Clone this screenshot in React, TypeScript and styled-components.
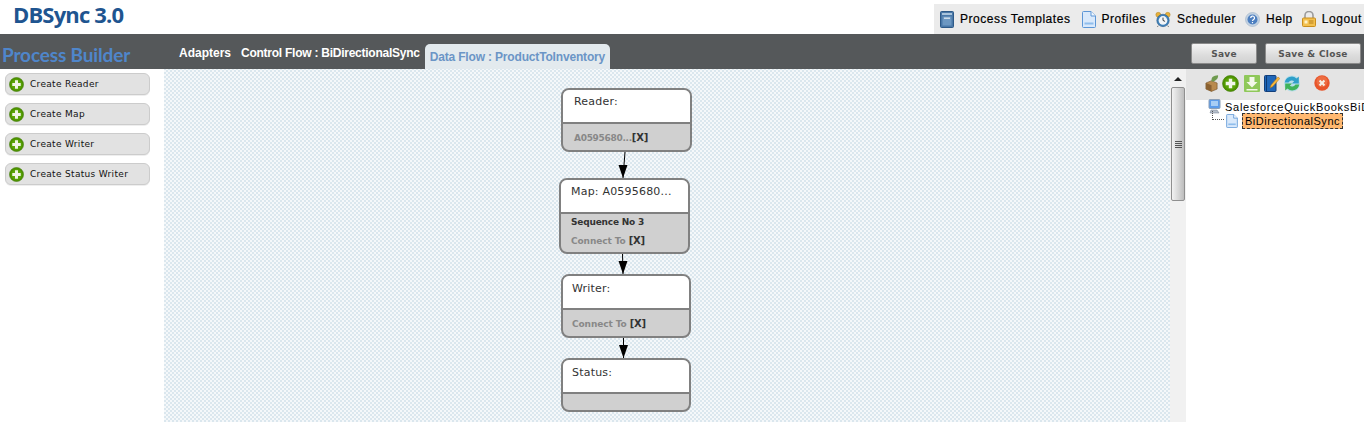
import React from "react";
import styled, { createGlobalStyle } from "styled-components";

const Global = createGlobalStyle`
  html, body { margin: 0; padding: 0; background: #fff; overflow: hidden; }
  #root { width: 1364px; height: 422px; overflow: hidden; }
`;

const Page = styled.div`
  width: 1364px; height: 422px; display: flex; flex-direction: column;
  font-family: "Liberation Sans", Arial, sans-serif; background: #fff;
`;
const Header = styled.header`
  height: 34px; flex: none; display: flex; justify-content: space-between; align-items: flex-start;
`;
const Logo = styled.div`
  font-family: "Open Sans", sans-serif; font-weight: 700; font-size: 22px; line-height: 29px;
  color: #1f5590; padding-left: 13px; letter-spacing: -0.85px;
`;
const Nav = styled.nav`
  margin-top: 4px; width: 430px; height: 30px; box-sizing: border-box; background: #ebebeb;
  display: flex; align-items: center; padding: 0 0 0 6px; overflow: hidden; white-space: nowrap;
`;
const NavItem = styled.a<{ $gap: number }>`
  display: flex; align-items: center; gap: 6px; margin-right: ${(p) => p.$gap}px;
  font-size: 12px; font-weight: 400; color: #000; -webkit-text-stroke: 0.2px #000; letter-spacing: 0.55px;
`;
const Bar = styled.div`
  height: 35px; flex: none; background: #55585a; display: flex; align-items: flex-end; position: relative;
`;
const BarTitle = styled.div`
  width: 179px; flex: none; height: 35px; box-sizing: border-box; padding: 9px 0 0 2px;
  font-family: "Lato", sans-serif; font-weight: 700; font-size: 19px; line-height: 24px; color: #4f86cb; letter-spacing: -0.15px; white-space: nowrap;
`;
const BarLink = styled.span<{ $ls: number }>`
  height: 35px; line-height: 38px; align-self: flex-start; font-size: 12px; font-weight: 700; color: #fff;
  margin-right: 10px; white-space: nowrap; letter-spacing: ${(p) => p.$ls}px;
`;
const ActiveTab = styled.span`
  width: 185px; height: 25px; box-sizing: border-box; margin-left: -5px; padding-left: 5px;
  background: #e3eaee; border-radius: 5px 5px 0 0; font-size: 12px; font-weight: 700; color: #6b95c6; line-height: 27px; white-space: nowrap; letter-spacing: -0.17px;
`;
const BarActions = styled.div`
  margin-left: auto; display: flex; gap: 8px; align-self: flex-start; padding: 9px 3px 0 0;
`;
const SaveButton = styled.button<{ $w: number }>`
  width: ${(p) => p.$w}px; height: 21px; padding: 0; border: 1px solid #8a8a8a; border-radius: 2px;
  background: linear-gradient(#f4f4f4, #dcdcdc 60%, #d2d2d2); color: #555;
  font-family: "DejaVu Sans", sans-serif; font-size: 9px; font-weight: 700; letter-spacing: 0.3px;
`;
const Main = styled.main`
  flex: 1; display: flex; min-height: 0;
`;
const Sidebar = styled.aside`
  width: 164px; flex: none; box-sizing: border-box; padding: 4px 0 0 5px; display: flex; flex-direction: column; gap: 8px;
`;
const CreateButton = styled.div`
  width: 145px; height: 22px; box-sizing: border-box; border: 1px solid #ccc; border-radius: 6px; background: #e2e2e2;
  display: flex; align-items: center; padding-left: 3px; gap: 6px;
  font-family: "DejaVu Sans", sans-serif; font-size: 9px; color: #111; box-shadow: 0 1px 0 #eee; letter-spacing: 0.32px;
`;
const Canvas = styled.section`
  width: 1006px; flex: none; position: relative; overflow: hidden;
  background-color: #f5f8fa;
  background-image:
    conic-gradient(#dbe7ee 25%, transparent 0),
    conic-gradient(#dbe7ee 25%, transparent 0);
  background-size: 4px 4px;
  background-position: -2px -1px, 0 1px;
`;
const Node = styled.div<{ $x: number; $y: number; $w: number; $h: number }>`
  position: absolute; left: ${(p) => p.$x - 164}px; top: ${(p) => p.$y - 69}px; width: ${(p) => p.$w}px; height: ${(p) => p.$h}px;
  box-sizing: border-box; border: 2px solid #808080; border-radius: 8px; overflow: hidden; background: #d0d0d0;
  display: flex; flex-direction: column; font-family: "DejaVu Sans", sans-serif;
`;
const NodeHead = styled.div<{ $top: number; $left: number }>`
  height: 34px; flex: none; box-sizing: border-box; background: #fff; border-bottom: 2px solid #808080;
  padding: ${(p) => p.$top}px 0 0 ${(p) => p.$left}px; font-size: 11px; line-height: 16px; color: #333; letter-spacing: 0.2px;
`;
const NodeBody = styled.div<{ $left: number; $single?: boolean }>`
  flex: 1; padding: ${(p) => (p.$single ? "2px" : "0")} 0 ${(p) => (p.$single ? "0" : "2px")} ${(p) => p.$left}px;
  display: flex; flex-direction: column; justify-content: center; gap: 7px;
  font-size: 9px; font-weight: 700; line-height: 11px; color: #888; letter-spacing: -0.1px;
`;
const Seq = styled.div`color: #333; letter-spacing: -0.2px;`;
const ClipId = styled.span`letter-spacing: -0.3px;`;
const Del = styled.span`color: #333; font-size: 10px; letter-spacing: -0.2px;`;
const Connectors = styled.svg`
  position: absolute; left: 0; top: 0; width: 100%; height: 100%; pointer-events: none;
`;
const ScrollTrack = styled.div`
  width: 16px; flex: none; box-sizing: border-box; background: #f1f1f1; padding: 18px 1px 0; display: flex; flex-direction: column; align-items: center; position: relative;
`;
const ScrollUp = styled.div`
  position: absolute; top: 8px; left: 4px; width: 0; height: 0; border: 4px solid transparent; border-top: 0; border-bottom: 4px solid #222;
`;
const Thumb = styled.div`
  width: 14px; height: 114px; flex: none; box-sizing: border-box; border: 1px solid #8f8f8f; border-radius: 2px;
  background: linear-gradient(90deg, #f2f2f2, #d6d6d6 55%, #bdbdbd); display: flex; flex-direction: column; align-items: center; justify-content: center; gap: 1px;
`;
const Grip = styled.i`width: 7px; height: 1px; background: #555; display: block;`;
const Panel = styled.aside`
  flex: 1; min-width: 0; overflow: hidden; display: flex; flex-direction: column;
`;
const PanelTools = styled.div`
  height: 31px; flex: none; background: #e4e4e4; display: flex; align-items: center; padding: 0 0 3px 19px; box-sizing: border-box;
`;
const ToolSlot = styled.span<{ $mr: number }>`
  display: flex; flex: none; margin-right: ${(p) => p.$mr}px;
`;
const Tree = styled.div`
  padding: 0 0 0 22px; font-size: 11px; color: #000; white-space: nowrap;
`;
const TreeRow = styled.div`
  display: flex; align-items: center; height: 13px; gap: 4px; letter-spacing: 0.72px;
  & > svg { flex: none; }
`;
const TreeChild = styled.div`
  display: flex; align-items: center; height: 16px; padding-left: 18px; gap: 4px; position: relative;
  &::before { content: ""; position: absolute; left: 4px; top: -2px; width: 12px; height: 9px; border-left: 1px dotted #555; border-bottom: 1px dotted #555; box-sizing: border-box; }
`;
const Selected = styled.span`
  background: #ffb870; border: 1px dashed #333; height: 14px; line-height: 14px; padding: 0 2px; letter-spacing: 0.52px;
`;

const Plus = ({ s = 16 }: { s?: number }) => (
  <svg width={s} height={s} viewBox="0 0 16 16">
    <circle cx="8" cy="8" r="7.5" fill="#4f9400" stroke="#3f7a08" strokeWidth=".6" />
    <circle cx="8" cy="8" r="5.6" fill="#5ba40a" />
    <path d="M6.4 3.5h3.2v2.9h2.9v3.2H9.6v2.9H6.4V9.6H3.5V6.4h2.9z" fill="#f1f5ea" />
  </svg>
);
const BookIcon = () => (
  <svg width="14" height="17" viewBox="0 0 14 17">
    <rect x=".5" y=".5" width="13" height="16" rx="1" fill="#4a78a8" stroke="#2e5a88" />
    <rect x="2" y="2" width="10" height="2" fill="#a9c4dc" />
    <rect x="2.5" y="5.5" width="9" height="9" fill="#6d98c2" />
    <rect x="4" y="6.5" width="6" height="1.4" fill="#d5e3ef" />
  </svg>
);
const DocIcon = ({ w = 14, h = 17 }: { w?: number; h?: number }) => (
  <svg width={w} height={h} viewBox="0 0 14 17">
    <path d="M.5 1.500a1 1 0 0 1 1-1H9l4.500 4.500v10.500a1 1 0 0 1-1 1h-11a1 1 0 0 1-1-1z" fill="#d9e9fb" stroke="#5c96d6" />
    <path d="M9 .5V5h4.500" fill="#f3f8fe" stroke="#5c96d6" />
    <rect x="2.500" y="11.500" width="9" height="2" fill="#8fbdec" />
  </svg>
);
const ClockIcon = () => (
  <svg width="16" height="17" viewBox="0 0 17 17">
    <circle cx="3.500" cy="3.500" r="2.600" fill="#e9b23a" stroke="#a87a1c" strokeWidth=".5" />
    <circle cx="13.500" cy="3.500" r="2.600" fill="#e9b23a" stroke="#a87a1c" strokeWidth=".5" />
    <circle cx="8.500" cy="9.500" r="6.600" fill="#3f80b8" stroke="#28598a" strokeWidth=".6" />
    <circle cx="8.500" cy="9.500" r="4.600" fill="#f2f5f8" />
    <path d="M8.500 6.500v3l2.200 1" stroke="#333" strokeWidth="1" fill="none" />
    <path d="M3.500 15l-1 1.500M13.500 15l1 1.500" stroke="#777" strokeWidth="1" />
  </svg>
);
const HelpIcon = () => (
  <svg width="15" height="15" viewBox="0 0 15 15">
    <circle cx="7.500" cy="7.500" r="7" fill="#c3d2e2" stroke="#9eb2c7" strokeWidth=".6" />
    <circle cx="7.500" cy="7.500" r="5" fill="#4d7fc0" />
    <path d="M5.700 6a1.900 1.900 0 1 1 2.800 1.600c-.6.4-1 .7-1 1.400" stroke="#fff" strokeWidth="1.200" fill="none" />
    <rect x="6.900" y="10" width="1.200" height="1.200" fill="#fff" />
  </svg>
);
const LockIcon = () => (
  <svg width="14" height="16" viewBox="0 0 14 16">
    <path d="M3 7V4.500a4 4 0 0 1 8 0V7" stroke="#9b9b9b" strokeWidth="1.600" fill="none" />
    <rect x=".5" y="7" width="13" height="8.500" rx="1" fill="#f3c04e" stroke="#c98e1e" />
    <rect x="2.500" y="9.500" width="3" height="3" fill="#fff2c8" />
    <rect x="7" y="9.500" width="4.500" height="1" fill="#b9801b" />
    <rect x="7" y="11.500" width="4.500" height="1" fill="#b9801b" />
  </svg>
);
const BoxIcon = () => (
  <svg width="14" height="18" viewBox="0 0 15 18">
    <path d="M1 9l6-2.500L13 9v6.500L7 18l-6-2.500z" fill="#b98a4e" stroke="#6d4c22" strokeWidth=".6" />
    <path d="M7 11.500V18L1 15.500V9z" fill="#8a6131" />
    <path d="M7 7C6.500 3 9 1 14 .8c.3 3.500-2 6-6 6.700z" fill="#6e9a4e" />
  </svg>
);
const DownloadIcon = () => (
  <svg width="16" height="17" viewBox="0 0 16 17">
    <rect width="16" height="17" rx="1" fill="#8fc85a" />
    <path d="M5.500 2h5v5h3L8 12.500 2.500 7h3z" fill="#f3f8ea" />
    <rect x="2.500" y="14" width="11" height="1.500" fill="#f3f8ea" />
  </svg>
);
const EditIcon = () => (
  <svg width="16" height="17" viewBox="0 0 16 17">
    <rect x=".5" y=".5" width="11.500" height="16" rx="1" fill="#1f66b8" stroke="#123f7a" />
    <rect x="2" y="1" width="1" height="15" fill="#0e3a72" />
    <path d="M6 13l1-3 7-8 1.800 1.500-7 8z" fill="#f6b73c" stroke="#a86e12" strokeWidth=".5" />
  </svg>
);
const RefreshIcon = () => (
  <svg width="16" height="17" viewBox="0 0 16 17">
    <circle cx="8" cy="8.500" r="8" fill="#b5dde9" />
    <path d="M.8 7.500a7 7 0 0 1 11.700-4L14.800 1.500v7H8l2.200-2.300A4 4 0 0 0 4.500 7.500z" fill="#2f9fc9" />
    <path d="M15.200 9.500a7 7 0 0 1-11.700 4L1.200 15.500v-7H8l-2.200 2.300a4 4 0 0 0 5.700-1.300z" fill="#3fb35a" />
  </svg>
);
const CloseIcon = () => (
  <svg width="16" height="16" viewBox="0 0 16 16">
    <circle cx="8" cy="8" r="7.700" fill="#e8552a" />
    <circle cx="8" cy="6.500" r="5.500" fill="#f0774d" opacity=".7" />
    <path d="M4.800 6.300L6.300 4.800 8 6.500l1.700-1.700 1.500 1.500L9.500 8l1.700 1.700-1.500 1.500L8 9.500l-1.700 1.700-1.500-1.500L6.500 8z" fill="#f6f1e6" />
  </svg>
);
const ComputerIcon = () => (
  <svg width="13" height="15" viewBox="0 0 13 15">
    <rect x="1" y=".5" width="11" height="9" rx="1" fill="#5b9bea" stroke="#8a9fb8" />
    <rect x="3" y="2" width="7" height="5" fill="#a7cdf5" />
    <path d="M3 11h6l2 3H2z" fill="#b6bfca" stroke="#6d7a8c" strokeWidth=".5" />
  </svg>
);

const Arrow = ({ x1, y1, x2, y2 }: { x1: number; y1: number; x2: number; y2: number }) => (
  <g>
    <line x1={x1 - 164} y1={y1 - 69} x2={x2 - 164} y2={y2 - 69} stroke="#000" strokeWidth="1" />
    <polygon points={`${x2 - 164},${y2 - 69} ${x2 - 168.5},${y2 - 82} ${x2 - 159.5},${y2 - 82}`} fill="#000" />
  </g>
);

const creators = ["Create Reader", "Create Map", "Create Writer", "Create Status Writer"];

export default function App() {
  return (
    <Page>
      <Global />
      <Header>
        <Logo>DBSync 3.0</Logo>
        <Nav>
          <NavItem $gap={11}><BookIcon />Process Templates</NavItem>
          <NavItem $gap={9}><DocIcon />Profiles</NavItem>
          <NavItem $gap={9}><ClockIcon />Scheduler</NavItem>
          <NavItem $gap={9}><HelpIcon />Help</NavItem>
          <NavItem $gap={0}><LockIcon />Logout</NavItem>
        </Nav>
      </Header>
      <Bar>
        <BarTitle>Process Builder</BarTitle>
        <BarLink $ls={0}>Adapters</BarLink>
        <BarLink $ls={-0.25}>Control Flow : BiDirectionalSync</BarLink>
        <ActiveTab>Data Flow : ProductToInventory</ActiveTab>
        <BarActions>
          <SaveButton $w={66}>Save</SaveButton>
          <SaveButton $w={96}>Save &amp; Close</SaveButton>
        </BarActions>
      </Bar>
      <Main>
        <Sidebar>
          {creators.map((c) => (
            <CreateButton key={c}><Plus s={15} />{c}</CreateButton>
          ))}
        </Sidebar>
        <Canvas>
          <Connectors>
            <Arrow x1={625} y1={152} x2={623} y2={178} />
            <Arrow x1={622.5} y1={254} x2={623} y2={274} />
            <Arrow x1={623.5} y1={337} x2={623.5} y2={358} />
          </Connectors>
          <Node $x={561} $y={88} $w={131} $h={64}>
            <NodeHead $top={4} $left={11}>Reader:</NodeHead>
            <NodeBody $left={11} $single><span><ClipId>A0595680...</ClipId><Del>[X]</Del></span></NodeBody>
          </Node>
          <Node $x={559} $y={178} $w={131} $h={76}>
            <NodeHead $top={4} $left={10}>Map: A0595680...</NodeHead>
            <NodeBody $left={10}><Seq>Sequence No 3</Seq><span>Connect To <Del>[X]</Del></span></NodeBody>
          </Node>
          <Node $x={561} $y={274} $w={130} $h={64}>
            <NodeHead $top={5} $left={9}>Writer:</NodeHead>
            <NodeBody $left={9} $single><span>Connect To <Del>[X]</Del></span></NodeBody>
          </Node>
          <Node $x={561} $y={358} $w={130} $h={54}>
            <NodeHead $top={5} $left={9}>Status:</NodeHead>
            <NodeBody $left={9} />
          </Node>
        </Canvas>
        <ScrollTrack>
          <ScrollUp />
          <Thumb><Grip /><Grip /><Grip /><Grip /></Thumb>
        </ScrollTrack>
        <Panel>
          <PanelTools>
            <ToolSlot $mr={3}><BoxIcon /></ToolSlot>
            <ToolSlot $mr={5}><Plus s={17} /></ToolSlot>
            <ToolSlot $mr={4}><DownloadIcon /></ToolSlot>
            <ToolSlot $mr={4}><EditIcon /></ToolSlot>
            <ToolSlot $mr={14}><RefreshIcon /></ToolSlot>
            <ToolSlot $mr={0}><CloseIcon /></ToolSlot>
          </PanelTools>
          <Tree>
            <TreeRow><ComputerIcon />SalesforceQuickBooksBiD</TreeRow>
            <TreeChild><DocIcon w={12} h={14} /><Selected>BiDirectionalSync</Selected></TreeChild>
          </Tree>
        </Panel>
      </Main>
    </Page>
  );
}
